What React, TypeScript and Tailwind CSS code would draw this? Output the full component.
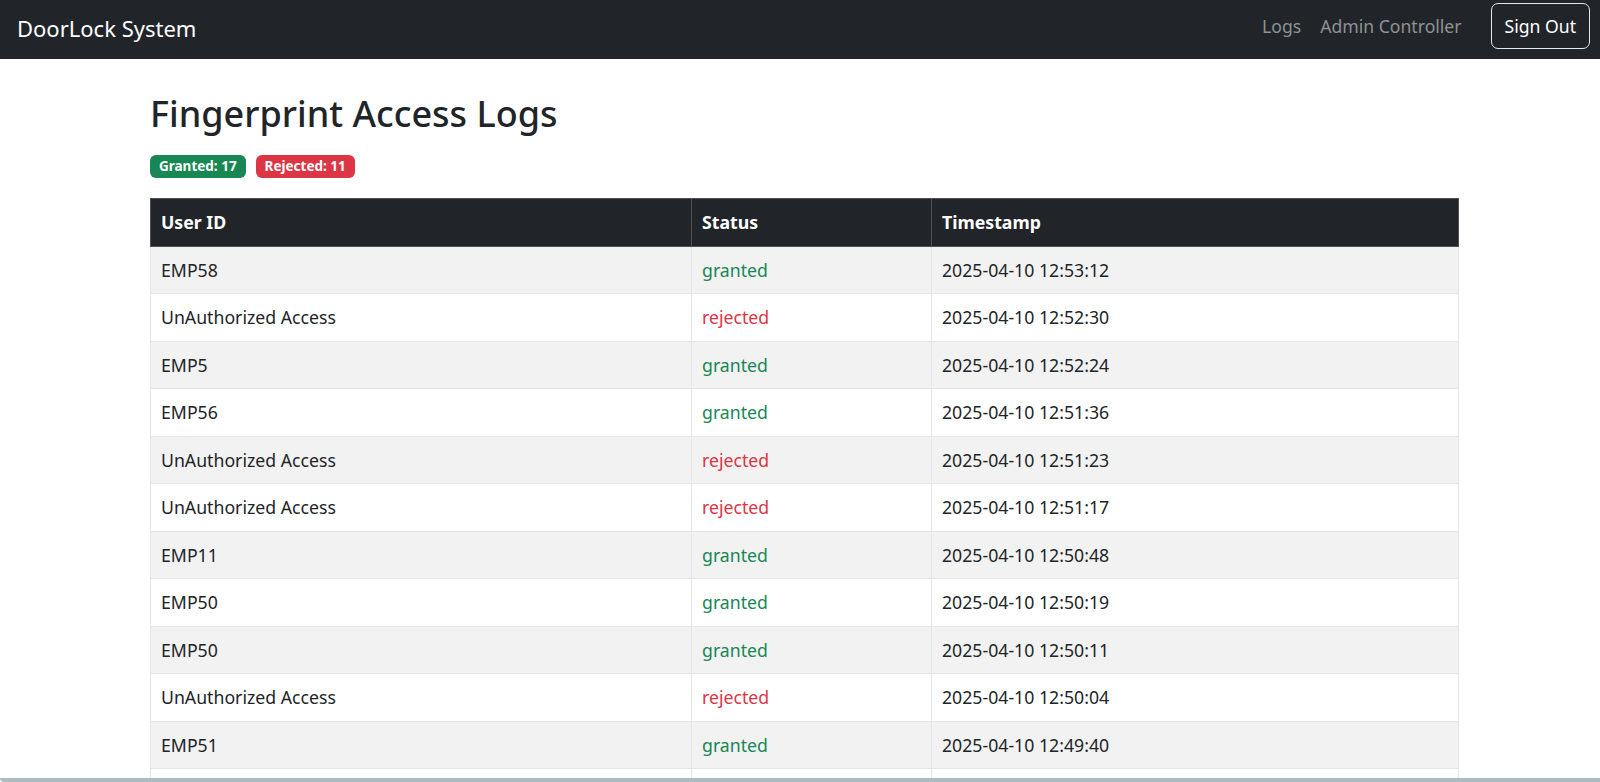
import React from 'react';

type LogRow = {
  userId: string;
  status: 'granted' | 'rejected';
  timestamp: string;
};

const logs: LogRow[] = [
  { userId: 'EMP58', status: 'granted', timestamp: '2025-04-10 12:53:12' },
  { userId: 'UnAuthorized Access', status: 'rejected', timestamp: '2025-04-10 12:52:30' },
  { userId: 'EMP5', status: 'granted', timestamp: '2025-04-10 12:52:24' },
  { userId: 'EMP56', status: 'granted', timestamp: '2025-04-10 12:51:36' },
  { userId: 'UnAuthorized Access', status: 'rejected', timestamp: '2025-04-10 12:51:23' },
  { userId: 'UnAuthorized Access', status: 'rejected', timestamp: '2025-04-10 12:51:17' },
  { userId: 'EMP11', status: 'granted', timestamp: '2025-04-10 12:50:48' },
  { userId: 'EMP50', status: 'granted', timestamp: '2025-04-10 12:50:19' },
  { userId: 'EMP50', status: 'granted', timestamp: '2025-04-10 12:50:11' },
  { userId: 'UnAuthorized Access', status: 'rejected', timestamp: '2025-04-10 12:50:04' },
  { userId: 'EMP51', status: 'granted', timestamp: '2025-04-10 12:49:40' },
  { userId: 'EMP49', status: 'granted', timestamp: '2025-04-10 12:49:12' },
];

function Navbar() {
  return (
    <nav className="flex h-[59px] items-start justify-between bg-[#212529] pl-[17px] pr-[10px] pt-[3px]">
      <span className="mt-[9px] text-[22px] leading-[32px] text-white">DoorLock System</span>
      <div className="flex items-center">
        <a className="text-[17.6px] text-[#8f9194]">Logs</a>
        <a className="ml-[19px] text-[17.6px] text-[#8f9194]">Admin Controller</a>
        <button className="ml-[29px] h-[46px] rounded-[7px] border border-[#e5e7ea] px-[13px] text-[17.6px] text-white">
          Sign Out
        </button>
      </div>
    </nav>
  );
}

export default function App() {
  const granted = 17;
  const rejected = 11;

  return (
    <div className="min-h-screen bg-white font-['Segoe_UI','Noto_Sans',sans-serif] text-[#212529]">
      <Navbar />
      <main className="box-content w-[1308px] pl-[150px]">
        <h1 className="mt-[31px] text-[36px] font-medium leading-[1.33]">Fingerprint Access Logs</h1>
        <div className="mt-[17px] flex gap-[10px]">
          <span className="flex h-[23px] items-center rounded-[6px] bg-[#198754] px-[9px] text-[13.5px] font-bold text-white">
            Granted: {granted}
          </span>
          <span className="flex h-[23px] items-center rounded-[6px] bg-[#dc3545] px-[9px] text-[13.5px] font-bold text-white">
            Rejected: {rejected}
          </span>
        </div>
        <table className="mt-[20px] w-[1308px] table-fixed border-collapse text-[17.7px]">
          <colgroup>
            <col className="w-[541px]" />
            <col className="w-[240px]" />
            <col className="w-[527px]" />
          </colgroup>
          <thead>
            <tr className="h-[48px] bg-[#212529] text-left text-white">
              <th className="border border-[#4d5154] px-[10px] font-bold">User ID</th>
              <th className="border border-[#4d5154] px-[10px] font-bold">Status</th>
              <th className="border border-[#4d5154] px-[10px] font-bold">Timestamp</th>
            </tr>
          </thead>
          <tbody>
            {logs.map((row, i) => (
              <tr key={i} className={`h-[47.5px] ${i % 2 === 0 ? 'bg-[#f2f2f2]' : 'bg-white'}`}>
                <td className="border border-[#e3e5e8] px-[10px]">{row.userId}</td>
                <td
                  className={`border border-[#e3e5e8] px-[10px] ${
                    row.status === 'granted' ? 'text-[#198754]' : 'text-[#dc3545]'
                  }`}
                >
                  {row.status}
                </td>
                <td className="border border-[#e3e5e8] px-[10px]">{row.timestamp}</td>
              </tr>
            ))}
          </tbody>
        </table>
      </main>
      <div className="fixed bottom-0 left-0 h-[4px] w-full rounded-bl-[6px] bg-[#a9bdbf]" />
    </div>
  );
}
